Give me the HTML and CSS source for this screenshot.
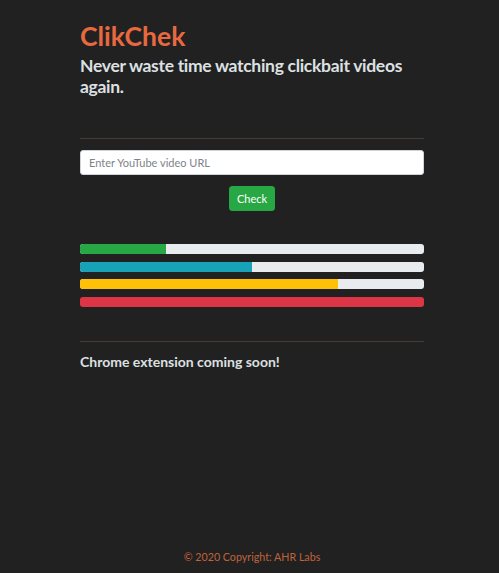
FILE: index.html
```html
<!DOCTYPE html>
<html>
<head>
<meta charset="utf-8">
<link rel="stylesheet" href="styles.css">
</head>
<body>
<div class="page">
  <main class="container">
    <h1 class="title">ClikChek</h1>
    <h3 class="subtitle">Never waste time watching clickbait videos again.</h3>
    <hr class="rule rule-top">
    <form class="check-form" onsubmit="return false">
      <input class="url-input" type="text" placeholder="Enter YouTube video URL">
      <button class="btn-check" type="button">Check</button>
    </form>
    <div class="bars">
      <div class="progress"><div class="bar bar-green" style="width:25%"></div></div>
      <div class="progress"><div class="bar bar-teal" style="width:50%"></div></div>
      <div class="progress"><div class="bar bar-yellow" style="width:75%"></div></div>
      <div class="progress"><div class="bar bar-red" style="width:100%"></div></div>
    </div>
    <hr class="rule rule-bottom">
    <h4 class="soon">Chrome extension coming soon!</h4>
  </main>
  <footer class="footer">© 2020 Copyright: AHR Labs</footer>
</div>
</body>
</html>
```
FILE: styles.css
```css
html, body {
  margin: 0;
  padding: 0;
  height: 100%;
  background: #212121;
}
body {
  font-family: Lato, "Open Sans", sans-serif;
  color: #dcdcdc;
}
.page {
  min-height: 100%;
  display: flex;
  flex-direction: column;
  box-sizing: border-box;
}
.container {
  width: 344px;
  margin-left: 80px;
  padding-top: 19px;
  flex: 1;
}
.title {
  margin: 0;
  font-size: 26.5px;
  font-weight: 700;
  line-height: 34px;
  color: #e8693f;
}
.subtitle {
  margin: 2px 0 0;
  font-size: 17.5px;
  font-weight: 700;
  line-height: 21px;
  letter-spacing: -0.3px;
  color: #dde0e2;
}
.rule {
  border: 0;
  border-top: 1px solid #4a3a33;
  margin: 0;
}
.rule-top {
  margin-top: 41px;
}
.check-form {
  display: flex;
  flex-direction: column;
  align-items: center;
  gap: 11px;
  margin-top: 11px;
}
.url-input {
  box-sizing: border-box;
  width: 100%;
  height: 25px;
  border: 1px solid #ced4da;
  border-radius: 3px;
  background: #fff;
  padding: 0 8px;
  font-family: inherit;
  font-size: 11px;
  color: #495057;
  outline: none;
}
.url-input::placeholder {
  color: #7d848a;
}
.btn-check {
  height: 25px;
  padding: 0 7px;
  border: 1px solid #28a745;
  border-radius: 3px;
  background: #28a745;
  color: #fff;
  font-family: inherit;
  font-size: 11px;
}
.bars {
  display: flex;
  flex-direction: column;
  gap: 7.5px;
  margin-top: 33px;
}
.progress {
  height: 10px;
  border-radius: 3px;
  background: #e9ecef;
  overflow: hidden;
}
.bar { height: 100%; }
.bar-green { background: #28a745; }
.bar-teal { background: #17a2b8; }
.bar-yellow { background: #ffc107; }
.bar-red { background: #dc3545; }
.rule-bottom {
  margin-top: 34px;
}
.soon {
  margin: 10px 0 0;
  font-size: 14px;
  font-weight: 700;
  line-height: 19px;
  color: #dde0e2;
}
.footer {
  text-align: center;
  padding: 0 0 9px 5px;
  font-size: 10.7px;
  line-height: 14px;
  color: #c0633c;
}
```
